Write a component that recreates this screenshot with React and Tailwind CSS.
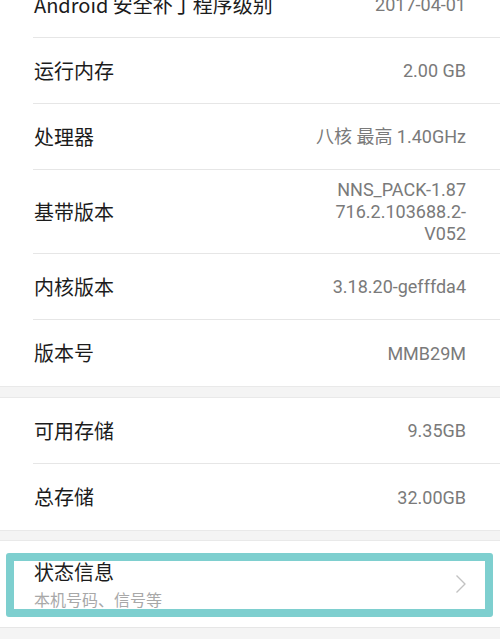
const GROUP_ONE = [
  { label: 'Android 安全补丁程序级别', value: '2017-04-01' },
  { label: '运行内存', value: '2.00 GB' },
  { label: '处理器', value: '八核 最高 1.40GHz' },
  { label: '基带版本', value: ['NNS_PACK-1.87', '716.2.103688.2-', 'V052'], tall: true },
  { label: '内核版本', value: '3.18.20-gefffda4' },
  { label: '版本号', value: 'MMB29M' },
];

const GROUP_TWO = [
  { label: '可用存储', value: '9.35GB' },
  { label: '总存储', value: '32.00GB' },
];

const labelFont = { fontFamily: '"Noto Sans CJK SC", sans-serif' };
const valueFont = { fontFamily: 'Roboto, "Noto Sans CJK SC", sans-serif' };

const Row = ({ item, last }) => (
  <div
    className={`ml-[33px] pl-px pr-[34px] flex items-center justify-between ${
      item.tall ? 'h-[84px]' : 'h-[66px]'
    } ${last ? '' : 'border-b border-[#e6e6e6]'}`}
  >
    <span className="text-[20px] leading-[26px] text-[#1c1c1c]" style={labelFont}>
      {item.label}
    </span>
    {Array.isArray(item.value) ? (
      <div className="text-right text-[18px] leading-[22px] text-[#7a7a7a]" style={valueFont}>
        {item.value.map(line => (
          <div key={line}>{line}</div>
        ))}
      </div>
    ) : (
      <span className="text-[18px] text-[#7a7a7a]" style={valueFont}>
        {item.value}
      </span>
    )}
  </div>
);

const Band = ({ h }) => (
  <div className={`${h} bg-[#f4f4f4] border-y border-[#e9e9e9]`} />
);

const Chevron = () => (
  <svg width="12" height="20" viewBox="0 0 12 20" fill="none">
    <polyline points="1.5,1.5 10,10 1.5,18.5" stroke="#c2c2c2" strokeWidth="1.4" strokeLinejoin="round" />
  </svg>
);

export default function App() {
  return (
    <div className="w-[500px] h-[639px] overflow-hidden bg-white">
      <div className="-mt-[28px]">
        {GROUP_ONE.map((item, i) => (
          <Row key={item.label} item={item} last={i === GROUP_ONE.length - 1} />
        ))}
      </div>

      <Band h="h-[12px]" />

      {GROUP_TWO.map((item, i) => (
        <Row key={item.label} item={item} last={i === GROUP_TWO.length - 1} />
      ))}

      <Band h="h-[11px]" />

      {/* Status info, highlighted */}
      <div className="relative h-[87px] border-b border-[#e6e6e6] pl-[34px] pr-[33px] flex items-center justify-between">
        <div className="flex flex-col gap-[3px]">
          <span className="text-[20px] leading-[26px] text-[#1c1c1c]" style={labelFont}>
            状态信息
          </span>
          <span className="text-[16px] leading-[22px] text-[#a8a8a8]" style={labelFont}>
            本机号码、信号等
          </span>
        </div>
        <Chevron />
        <div className="absolute left-[6px] right-[7px] top-[12px] bottom-[10px] border-[8px] border-[#7ecfcf] rounded-[3px] pointer-events-none" />
      </div>

      <div className="h-[20px] bg-[#f4f4f4]" />
    </div>
  );
}
